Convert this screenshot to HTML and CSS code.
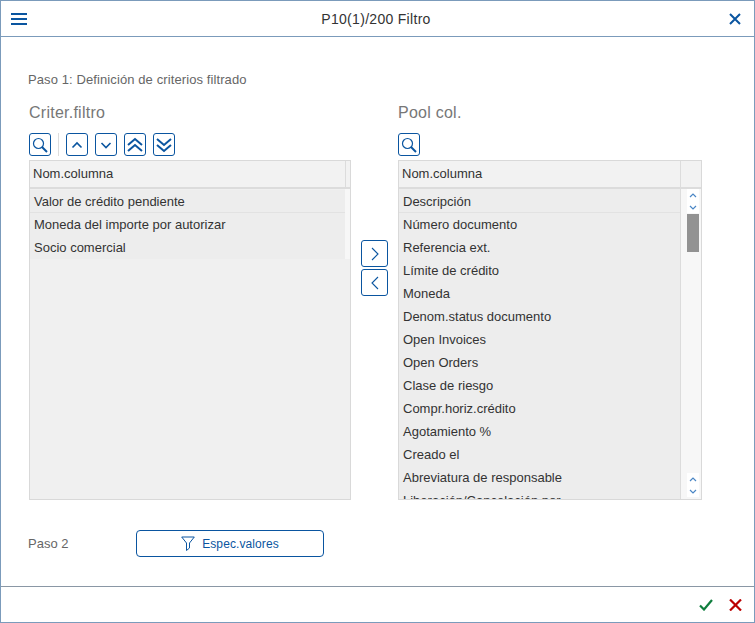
FILE: index.html
```html
<!DOCTYPE html>
<html lang="en">

<head>
    <meta charset="UTF-8">
    <meta name="viewport" content="width=device-width, initial-scale=1.0">
    <title>P10(1)/200 Filtro</title>
    <link rel="stylesheet" href="styles.css">
</head>

<body>

<div class="dialog">
    <div class="title-bar">
        <svg class="menu-icon" width="16" height="12" viewBox="0 0 16 12"><path d="M0 1h16M0 6h16M0 11h16" stroke="#0a55a0" stroke-width="2"/></svg>
        <div class="title">P10(1)/200 Filtro</div>
        <svg class="close-icon" width="12" height="12" viewBox="0 0 12 12"><path d="M1 1l10 10M11 1L1 11" stroke="#0a55a0" stroke-width="2"/></svg>
    </div>

    <div class="content">
        <div class="step-label">Paso 1: Definición de criterios filtrado</div>

        <div class="columns">
            <div class="panel panel-left">
                <div class="panel-title">Criter.filtro</div>
                <div class="toolbar">
                    <button class="tool-btn"><svg width="18" height="18" viewBox="0 0 18 18"><circle cx="7.5" cy="7.5" r="5" fill="none" stroke="#0a55a0" stroke-width="1.2"/><path d="M11 11l5 5" stroke="#0a55a0" stroke-width="2"/></svg></button>
                    <span class="tool-sep"></span>
                    <button class="tool-btn"><svg width="14" height="14" viewBox="0 0 14 14"><path d="M2.5 9.5L7 5l4.500 4.500" fill="none" stroke="#0a55a0" stroke-width="1.6"/></svg></button>
                    <button class="tool-btn"><svg width="14" height="14" viewBox="0 0 14 14"><path d="M2.500 5L7 9.500 11.500 5" fill="none" stroke="#0a55a0" stroke-width="1.6"/></svg></button>
                    <button class="tool-btn"><svg width="18" height="18" viewBox="0 0 18 18"><path d="M2 9l7-6 7 6M2 15l7-6 7 6" fill="none" stroke="#0a55a0" stroke-width="2"/></svg></button>
                    <button class="tool-btn"><svg width="18" height="18" viewBox="0 0 18 18"><path d="M2 3l7 6 7-6M2 9l7 6 7-6" fill="none" stroke="#0a55a0" stroke-width="2"/></svg></button>
                </div>
                <div class="table">
                    <div class="table-head">
                        <div class="head-cell">Nom.columna</div>
                        <div class="head-end head-end-small"></div>
                    </div>
                    <div class="table-body">
                        <div class="rows">
                            <div class="row row-first">Valor de crédito pendiente</div>
                            <div class="row">Moneda del importe por autorizar</div>
                            <div class="row">Socio comercial</div>
                        </div>
                        <div class="side-strip"></div>
                    </div>
                </div>
            </div>

            <div class="move-btns">
                <button class="move-btn"><svg width="10" height="14" viewBox="0 0 10 14"><path d="M2 1l6 6-6 6" fill="none" stroke="#0a55a0" stroke-width="1.1"/></svg></button>
                <button class="move-btn"><svg width="10" height="14" viewBox="0 0 10 14"><path d="M8 1L2 7l6 6" fill="none" stroke="#0a55a0" stroke-width="1.1"/></svg></button>
            </div>

            <div class="panel panel-right">
                <div class="panel-title">Pool col.</div>
                <div class="toolbar">
                    <button class="tool-btn"><svg width="18" height="18" viewBox="0 0 18 18"><circle cx="7.500" cy="7.500" r="5" fill="none" stroke="#0a55a0" stroke-width="1.2"/><path d="M11 11l5 5" stroke="#0a55a0" stroke-width="2"/></svg></button>
                </div>
                <div class="table">
                    <div class="table-head">
                        <div class="head-cell">Nom.columna</div>
                        <div class="head-end"></div>
                    </div>
                    <div class="table-body">
                        <div class="rows rows-full">
                            <div class="row row-first">Descripción</div>
                            <div class="row">Número documento</div>
                            <div class="row">Referencia ext.</div>
                            <div class="row">Límite de crédito</div>
                            <div class="row">Moneda</div>
                            <div class="row">Denom.status documento</div>
                            <div class="row">Open Invoices</div>
                            <div class="row">Open Orders</div>
                            <div class="row">Clase de riesgo</div>
                            <div class="row">Compr.horiz.crédito</div>
                            <div class="row">Agotamiento %</div>
                            <div class="row">Creado el</div>
                            <div class="row">Abreviatura de responsable</div>
                            <div class="row">Liberación/Cancelación por</div>
                        </div>
                        <div class="scrollbar">
                            <div class="scroll-btn"><svg width="8" height="5" viewBox="0 0 8 5"><path d="M1 4l3-3 3 3" fill="none" stroke="#4a86c5" stroke-width="1.2"/></svg></div>
                            <div class="scroll-btn"><svg width="8" height="5" viewBox="0 0 8 5"><path d="M1 1l3 3 3-3" fill="none" stroke="#4a86c5" stroke-width="1.2"/></svg></div>
                            <div class="scroll-thumb"></div>
                            <div class="scroll-track"></div>
                            <div class="scroll-btn"><svg width="8" height="5" viewBox="0 0 8 5"><path d="M1 4l3-3 3 3" fill="none" stroke="#4a86c5" stroke-width="1.2"/></svg></div>
                            <div class="scroll-btn"><svg width="8" height="5" viewBox="0 0 8 5"><path d="M1 1l3 3 3-3" fill="none" stroke="#4a86c5" stroke-width="1.2"/></svg></div>
                        </div>
                    </div>
                </div>
            </div>
        </div>

        <div class="step-two">
            <div class="step-two-label">Paso 2</div>
            <button class="values-btn">
                <svg width="14" height="15" viewBox="0 0 14 15"><path d="M.7 1h12.600L8.500 7v5l-3 2.500V7z" fill="none" stroke="#0a55a0" stroke-width="1"/></svg>
                Espec.valores
            </button>
        </div>
    </div>

    <div class="footer">
        <svg width="14" height="12" viewBox="0 0 14 12"><path d="M1 6.500l4 4L13 1" fill="none" stroke="#107e3e" stroke-width="2.200"/></svg>
        <svg width="13" height="12" viewBox="0 0 13 12"><path d="M1 .5l11 11M12 .5l-11 11" fill="none" stroke="#bb0000" stroke-width="2.200"/></svg>
    </div>
</div>

</body>

</html>
```

FILE: styles.css
```css
* {
    box-sizing: border-box;
}

body {
    margin: 0;
    font-family: 'Liberation Sans', Arial, sans-serif;
    background-color: #fff;
}

.dialog {
    width: 755px;
    height: 623px;
    border: 1px solid #7b9bbb;
    display: flex;
    flex-direction: column;
    overflow: hidden;
}

.title-bar {
    height: 36px;
    flex: none;
    border-bottom: 1px solid #7b9bbb;
    display: flex;
    align-items: center;
    justify-content: space-between;
    padding: 0 13px 0 10px;
}

.title {
    font-size: 14px;
    letter-spacing: 0.3px;
    color: #333;
    margin-right: 4px;
}

.content {
    flex: 1;
    padding: 35px 0 0 28px;
    display: flex;
    flex-direction: column;
}

.step-label {
    font-size: 13px;
    letter-spacing: 0.1px;
    line-height: 16px;
    color: #666;
    height: 16px;
    margin-left: -1px;
}

.columns {
    display: flex;
    margin-top: 15px;
}

.panel-title {
    font-size: 16px;
    letter-spacing: 0.25px;
    line-height: 20px;
    color: #777;
    height: 20px;
}

.toolbar {
    display: flex;
    align-items: center;
    gap: 7px;
    margin-top: 10px;
    height: 23px;
}

.tool-btn {
    width: 22px;
    height: 23px;
    padding: 0;
    background: #fff;
    border: 1px solid #0a55a0;
    border-radius: 3px;
    display: flex;
    align-items: center;
    justify-content: center;
}

.tool-sep {
    width: 1px;
    height: 23px;
    background-color: #ddd;
}

.table {
    margin-top: 4px;
    height: 340px;
    border: 1px solid #d9d9d9;
    display: flex;
    flex-direction: column;
}

.panel-left {
    width: 322px;
}

.panel-right {
    width: 304px;
}

.table-head {
    height: 28px;
    flex: none;
    background-color: #f2f2f2;
    border-bottom: 2px solid #dcdcdc;
    display: flex;
}

.head-cell {
    flex: 1;
    font-size: 13px;
    line-height: 26px;
    padding-left: 3px;
    color: #333;
}

.head-end {
    width: 21px;
    border-left: 1px solid #dcdcdc;
}

.head-end-small {
    width: 5px;
}

.table-body {
    flex: 1;
    display: flex;
    background-color: #f0f0f0;
    overflow: hidden;
    min-height: 0;
}

.rows {
    flex: 1;
    min-width: 0;
    padding-top: 1px;
}

.rows-full {
    background-color: #ededed;
}

.row {
    height: 23px;
    line-height: 23px;
    font-size: 13px;
    padding-left: 4px;
    color: #333;
    background-color: #ededed;
    white-space: nowrap;
}

.row-first {
    border-bottom: 1px solid #e2e2e2;
}

.side-strip {
    width: 5px;
    background-color: #fff;
    height: 70px;
}

.panel-left .side-strip {
    background-color: #f7f7f7;
}

.scrollbar {
    width: 21px;
    background-color: #f7f7f7;
    border-left: 1px solid #dcdcdc;
    padding: 0 2px 2px 6px;
    display: flex;
    flex-direction: column;
    height: 100%;
}

.scroll-btn {
    height: 12px;
    flex: none;
    background-color: #fff;
    display: flex;
    align-items: center;
    justify-content: center;
}

.scroll-thumb {
    height: 38px;
    flex: none;
    background-color: #929292;
    margin-top: 1px;
}

.scroll-track {
    flex: 1;
}

.move-btns {
    width: 47px;
    padding: 137px 0 0 10px;
    display: flex;
    flex-direction: column;
    gap: 2px;
}

.move-btn {
    width: 27px;
    height: 27px;
    padding: 0;
    background: #fff;
    border: 1px solid #0a55a0;
    border-radius: 3px;
    display: flex;
    align-items: center;
    justify-content: center;
}

.step-two {
    display: flex;
    align-items: center;
    margin-top: 30px;
}

.step-two-label {
    width: 107px;
    font-size: 13px;
    color: #666;
    margin-left: -1px;
    padding-right: 0;
    flex: none;
    margin-right: 1px;
}

.values-btn {
    width: 188px;
    height: 27px;
    background: #fff;
    border: 1px solid #0a55a0;
    border-radius: 4px;
    display: flex;
    align-items: center;
    justify-content: center;
    gap: 7px;
    font-family: 'Liberation Sans', Arial, sans-serif;
    font-size: 12px;
    letter-spacing: 0.1px;
    color: #0a55a0;
    padding: 0;
}

.footer {
    height: 36px;
    flex: none;
    border-top: 1px solid #8a97a5;
    display: flex;
    align-items: center;
    justify-content: flex-end;
    gap: 16px;
    padding: 0 12px 0 0;
}
```
